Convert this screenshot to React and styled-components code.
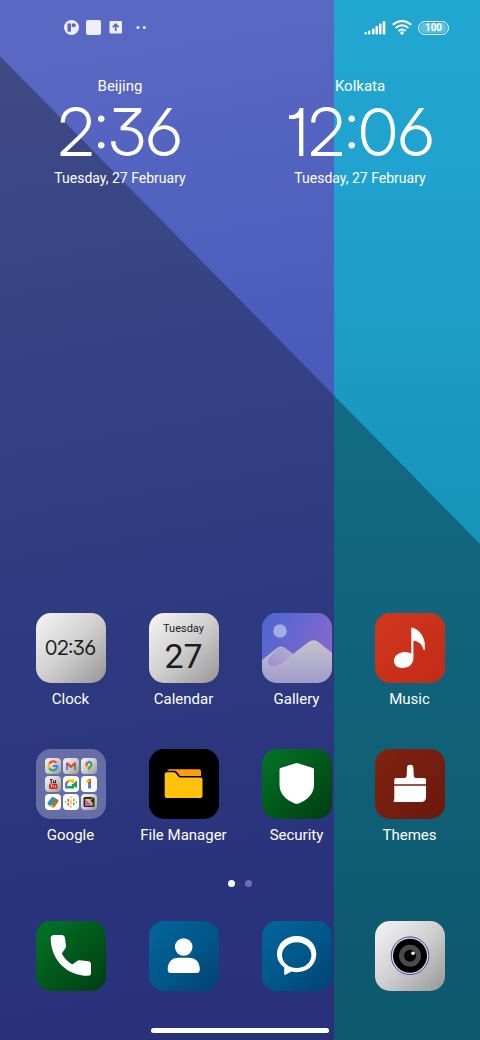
import React from 'react';
import styled, { createGlobalStyle } from 'styled-components';

const GlobalStyle = createGlobalStyle`
  *, *::before, *::after {
    box-sizing: border-box;
  }

  body {
    margin: 0;
    background: #28327a;
    font-family: Roboto, "Liberation Sans", sans-serif;
    color: #fff;
  }
`;

const Screen = styled.div`
  position: relative;
  isolation: isolate;
  display: flex;
  flex-direction: column;
  min-height: 100vh;
  overflow: hidden;
`;

const Wallpaper = styled.div`
  position: absolute;
  inset: 0;
  z-index: -1;
  display: grid;
  grid-template-columns: 334fr 146fr;
`;

const Panel = styled.div`
  background: ${props => props.$light};
`;

const Shade = styled(Wallpaper)`
  clip-path: polygon(0 5.4%, 100% 52.3%, 100% 100%, 0 100%);
`;

const StatusBar = styled.header`
  display: flex;
  align-items: center;
  justify-content: space-between;
  height: 55px;
  padding: 0 31px 0 64px;
`;

const StatusGroup = styled.div`
  display: flex;
  align-items: center;
  gap: ${props => props.$gap};
`;

const Battery = styled.span`
  display: flex;
  align-items: center;
  justify-content: center;
  width: 31px;
  height: 14px;
  border: 1px solid #e8f6fb;
  border-radius: 7px;
  background: #5fc0de;
  box-shadow: inset 0 0 0 1px #22a6cf;
  font-size: 10px;
  font-weight: 700;
  line-height: 12px;
`;

const Clocks = styled.section`
  display: grid;
  grid-template-columns: 1fr 1fr;
  padding-top: 21px;
`;

const CityClock = styled.div`
  display: flex;
  flex-direction: column;
  align-items: center;
  line-height: 20px;
  white-space: nowrap;
`;

const City = styled.span`
  font-size: 15px;
`;

const DateText = styled.span`
  font-size: 14px;
`;

const Time = styled.time`
  font-family: "Inter Display", Inter, Roboto, sans-serif;
  font-size: 66px;
  font-weight: 300;
  line-height: 72px;
  font-feature-settings: "cv01", "cv03", "cv09";
  font-variation-settings: "opsz" 32;
`;

const Apps = styled.main`
  display: grid;
  grid-template-columns: repeat(4, 1fr);
  row-gap: 40px;
  margin-top: auto;
  padding: 0 14px;
`;

const Dock = styled.nav`
  display: grid;
  grid-template-columns: repeat(4, 1fr);
  padding: 0 14px 37px;
`;

const AppButton = styled.button`
  display: flex;
  flex-direction: column;
  align-items: center;
  gap: 6px;
  padding: 0;
  border: none;
  background: none;
  color: inherit;
  font-family: inherit;
  font-size: 15px;
  line-height: 20px;
  white-space: nowrap;
  cursor: pointer;
`;

const Tile = styled.span`
  display: flex;
  flex-direction: column;
  align-items: center;
  justify-content: center;
  width: 70px;
  height: 70px;
  border-radius: 15px;
  overflow: hidden;
  background: ${props => props.$bg};
  color: #1c1c1c;
`;

const TileClock = styled.span`
  font-family: "Inter Display", Inter, Roboto, sans-serif;
  font-size: 20px;
  line-height: 24px;
  font-feature-settings: "cv01", "cv03", "cv09";
  font-variation-settings: "opsz" 32;
`;

const TileDay = styled.span`
  font-size: 11px;
  line-height: 16px;
`;

const TileDate = styled.span`
  font-size: 34px;
  line-height: 38px;
`;

const FolderGrid = styled.span`
  display: grid;
  grid-template-columns: repeat(3, 16px);
  gap: 2px;
`;

const MiniTile = styled.span`
  display: flex;
  height: 16px;
  border-radius: 4px;
  overflow: hidden;
  background: ${props => props.$bg};
`;

const Pager = styled.div`
  display: flex;
  align-items: center;
  justify-content: center;
  gap: 10px;
  height: 76px;
`;

const Dot = styled.span`
  width: 7px;
  height: 7px;
  border-radius: 50%;
  background: ${props => (props.$active ? '#fff' : '#6a71a8')};
`;

const HomeBar = styled.div`
  align-self: center;
  width: 37%;
  height: 5px;
  margin-bottom: 7px;
  border-radius: 3px;
  background: #fff;
`;

const silver = 'linear-gradient(135deg, #f6f6f6 0%, #cfcfcf 50%, #979797 100%)';
const green = 'linear-gradient(135deg, #04752a 0%, #005c1c 45%, #003d12 100%)';
const blue = 'linear-gradient(135deg, #03659a 0%, #01568a 55%, #01436f 100%)';

const Glyph = ({ children }) => (
  <svg width="70" height="70" viewBox="0 0 70 70" fill="#fff" aria-hidden="true">
    {children}
  </svg>
);

const Mini = ({ bg = '#fff', children }) => (
  <MiniTile $bg={bg}>
    <svg width="16" height="16" viewBox="0 0 16 16" fill="none" aria-hidden="true">
      {children}
    </svg>
  </MiniTile>
);

const GalleryIcon = () => (
  <Glyph>
    <defs>
      <linearGradient id="sky" x1="0" y1="0" x2="1" y2="0.6">
        <stop offset="0" stopColor="#4a66d2" />
        <stop offset="1" stopColor="#8a68ce" />
      </linearGradient>
      <linearGradient id="hill" x1="0" y1="0" x2="0" y2="1">
        <stop offset="0" stopColor="#c6c4cb" />
        <stop offset="1" stopColor="#a09bcd" />
      </linearGradient>
      <linearGradient id="ridge" x1="0" y1="1" x2="1" y2="0">
        <stop offset="0" stopColor="#9b8dcb" />
        <stop offset="1" stopColor="#b9afd4" />
      </linearGradient>
    </defs>
    <rect width="70" height="70" fill="url(#sky)" />
    <circle cx="18" cy="18" r="6.7" fill="#a5ade0" />
    <path d="M0 47 15 35Q19 32 23 35L31 41 46 29.500Q52 25 57 29.500L70 40V70H0Z" fill="url(#hill)" />
    <path d="M8 44 15 36.500Q19 33 23 35.500L31 41 22 49Q13 55 7.500 52 4 48.500 8 44Z" fill="url(#ridge)" />
  </Glyph>
);

const MusicIcon = () => (
  <Glyph>
    <path d="M36.300 15Q36.500 14.300 38 14.700C46 17.500 51 26 49.800 36.500Q49.300 38 48.500 36.500C47 31 43 28 38.400 27.800V45C38.400 51 34 55 27.500 55 22 55 19 52 19 48 19 42.500 24 39 30 39Q34 39 36.300 40.500Z" />
  </Glyph>
);

const FilesIcon = () => (
  <Glyph>
    <path d="M18.300 22.200Q18.300 20.200 20.300 20.200H50Q52 20.200 52 22.200V27H31L28 23Q27 21.800 25.500 21.800H18.300Z" fill="#ff9d0a" />
    <path d="M15.700 25.300Q15.700 23.300 17.700 23.300H24.500Q26 23.300 27 24.600L29 27.300Q30 28.600 31.500 28.600H51.500Q53.500 28.600 53.500 30.600V47Q53.500 49 51.500 49H17.700Q15.700 49 15.700 47Z" fill="#ffc20c" />
  </Glyph>
);

const SecurityIcon = () => (
  <Glyph>
    <path d="M33.500 14.300Q34.700 13.800 36 14.300L51 19Q52 19.400 52 20.500V36C52 45 45 51.500 36 54.700Q34.700 55 33.500 54.700C24.500 51.500 17.500 45 17.500 36V20.500Q17.500 19.400 18.500 19Z" />
  </Glyph>
);

const ThemesIcon = () => (
  <Glyph>
    <path d="M32 19Q32 15.700 35.200 15.700T38.400 19L38.800 27Q39 29 41 29H49.500Q51 29 51 30.500V35.200H19.300V30.500Q19.300 29 20.800 29H29.500Q31.500 29 31.700 27Z" />
    <path d="M19.300 36.800H51V48Q51 53 46 53H19.500Q18 53 18.800 51.600 19.300 50.500 19.300 49Z" />
  </Glyph>
);

const PhoneIcon = () => (
  <Glyph>
    <path d="M14.700 17.500Q14.700 14 18 14H26Q28.600 14 28.900 16.500L30 25Q30 26.500 29 27.800L25.800 32.500C28.500 37.500 31.500 40.500 36.300 43.500L41 40Q42.500 39 44 39.300L52.500 40.300Q55 40.600 55 43V52Q55 54.800 52 54.800C32 55 15 40 14.700 17.500Z" />
  </Glyph>
);

const ContactsIcon = () => (
  <Glyph>
    <circle cx="34.700" cy="26" r="8.800" />
    <path d="M18.700 48.500C18.700 41 23 36.800 29.500 36.800H40C46.500 36.800 50.800 41 50.800 48.500Q50.800 52 47.500 52H22Q18.700 52 18.700 48.500Z" />
  </Glyph>
);

const MessagesIcon = () => (
  <Glyph>
    <path
      fillRule="evenodd"
      d="M34.700 15C46 15 54.300 22.800 54.300 33S46 51.200 34.700 51.200Q32 51.200 29.500 50.600L23.500 53.800Q22.200 54.200 22.200 52.800V46.300C17.500 43 15 38.500 15 33 15 22.800 23.500 15 34.700 15ZM34.700 21.300C26.500 21.300 20 27 20 34.200S26.500 47 34.700 47 49.400 41.400 49.400 34.200 43 21.300 34.700 21.300Z"
    />
  </Glyph>
);

const CameraIcon = () => (
  <Glyph>
    <circle cx="35" cy="34.700" r="18.800" fill="#d8d8de" stroke="#5a3fae" />
    <circle cx="35" cy="34.700" r="17" fill="#000" />
    <circle cx="35" cy="34.700" r="8.500" fill="#050505" stroke="#4a4a4a" strokeWidth="5" />
    <circle cx="38" cy="32.300" r="1.800" />
  </Glyph>
);

const GoogleFolder = () => (
  <FolderGrid>
    <Mini bg={silver}>
      <g strokeWidth="2.200">
        <path d="M11.500 4.800A4.300 4.300 0 0 0 4.300 5.800" stroke="#ea4335" />
        <path d="M4.300 5.800A4.300 4.300 0 0 0 4.300 10.200" stroke="#fbbc05" />
        <path d="M4.300 10.200A4.300 4.300 0 0 0 10.800 11.300" stroke="#34a853" />
        <path d="M8 8H12.300A4.300 4.300 0 0 1 10.800 11.300" stroke="#4285f4" />
      </g>
    </Mini>
    <Mini bg={silver}>
      <path d="M4 12V5" stroke="#4285f4" strokeWidth="2" />
      <path d="M12 12V5" stroke="#34a853" strokeWidth="2" />
      <path d="M3.500 5 8 8.800 12.500 5" stroke="#ea4335" strokeWidth="2.400" />
    </Mini>
    <Mini bg={silver}>
      <path d="M8 13C7.500 10 4.500 9.500 4.500 6.500L8 6.500 11 4.500C13 8.500 9 9.500 8 13Z" fill="#34a853" />
      <path d="M4.700 7.500A3.500 3.500 0 0 1 6 3.700L8 6Z" fill="#ea4335" />
      <path d="M6 3.700A3.500 3.500 0 0 1 11 4.500L8.500 7Z" fill="#4285f4" />
      <path d="M5 8.500 8.500 5 9 7.500 6.500 10.500Z" fill="#fbbc05" />
      <circle cx="8" cy="6.500" r="1.200" fill="#ddd" />
    </Mini>
    <Mini bg={silver}>
      <path d="M5 3.500H7.500M6.200 3.500V7M8.500 4.500V6.500H10.500V4" stroke="#333" strokeWidth="1.200" />
      <rect x="4" y="7.500" width="8.500" height="5.500" rx="1.500" fill="#d5282c" />
      <path d="M5.500 9H7.500M6.500 9V11.500M8.500 9.500V11.500M10.500 9.500V11.500" stroke="#fff" strokeWidth="0.700" />
    </Mini>
    <Mini>
      <path d="M2 7 5.500 3.500V7Z" fill="#ea4335" />
      <path d="M5.500 4.700H10V7" stroke="#fbbc05" strokeWidth="2.400" />
      <path d="M3.200 7V11.300H6" stroke="#4285f4" strokeWidth="2.400" />
      <path d="M5.500 11.300H10V8" stroke="#12a34a" strokeWidth="2.400" />
      <path d="M10 8 14 4.500V12L10 9.500Z" fill="#12a34a" />
    </Mini>
    <Mini>
      <path d="M8.500 7V12.500" stroke="#4285f4" strokeWidth="3" />
      <path d="M8.500 3V7.500" stroke="#ea4335" strokeWidth="3" />
      <path d="M5.500 6 8.500 4" stroke="#fbbc05" strokeWidth="2.600" />
    </Mini>
    <Mini>
      <path d="M4.500 9.500 8 5" stroke="#3e7bf0" strokeWidth="4" strokeLinecap="round" />
      <path d="M8 11.500 11.500 7" stroke="#ea5136" strokeWidth="4" strokeLinecap="round" />
      <path d="M7 10.500 10 5.500" stroke="#34a853" strokeWidth="3.200" strokeLinecap="round" />
      <path d="M5.500 12H7" stroke="#fbbc05" strokeWidth="2" strokeLinecap="round" />
    </Mini>
    <Mini>
      <g strokeWidth="1.400" strokeLinecap="round">
        <path d="M2.500 8H2.600" stroke="#4285f4" />
        <path d="M5.200 5.500V7.500" stroke="#ea4335" />
        <path d="M5.200 9.500V11" stroke="#ea4335" />
        <path d="M8 3V3.500M8 6V10" stroke="#fbbc05" />
        <path d="M8 12.500V13" stroke="#fb8c05" />
        <path d="M10.800 5.500V6.500M10.800 9V10.500" stroke="#34a853" />
        <path d="M13.400 8H13.500" stroke="#34a853" />
      </g>
    </Mini>
    <Mini bg={silver}>
      <rect x="2.500" y="3" width="11" height="10" rx="1.500" fill="#2b2b2e" />
      <path d="M4 5H9L12 11.500H4Z" fill="#f2c14d" />
      <path d="M4 5 11 11.500H4Z" fill="#d653b8" />
      <path d="M4 8 7.500 11.500H4Z" fill="#6f7df0" />
      <path d="M8 5 12 9V11.500Z" fill="#54b66a" />
      <path d="M9 6.500 13 2.500" stroke="#e4e4e4" strokeWidth="0.800" />
    </Mini>
  </FolderGrid>
);

const clocks = [
  { city: 'Beijing', time: '2:36', date: 'Tuesday, 27 February' },
  { city: 'Kolkata', time: '12:06', date: 'Tuesday, 27 February' },
];

const apps = [
  { name: 'Clock', bg: silver, icon: <TileClock>02:36</TileClock> },
  {
    name: 'Calendar',
    bg: silver,
    icon: (
      <>
        <TileDay>Tuesday</TileDay>
        <TileDate>27</TileDate>
      </>
    ),
  },
  { name: 'Gallery', bg: '#4a66d2', icon: <GalleryIcon /> },
  { name: 'Music', bg: 'linear-gradient(135deg, #cf371d, #c32b19)', icon: <MusicIcon /> },
  { name: 'Google', bg: '#666ea5', icon: <GoogleFolder /> },
  { name: 'File Manager', bg: '#000', icon: <FilesIcon /> },
  { name: 'Security', bg: green, icon: <SecurityIcon /> },
  { name: 'Themes', bg: 'linear-gradient(135deg, #802312, #6b180e)', icon: <ThemesIcon /> },
];

const dockApps = [
  { name: 'Phone', bg: green, icon: <PhoneIcon /> },
  { name: 'Contacts', bg: blue, icon: <ContactsIcon /> },
  { name: 'Messages', bg: blue, icon: <MessagesIcon /> },
  { name: 'Camera', bg: silver, icon: <CameraIcon /> },
];

export default function App() {
  return (
    <>
      <GlobalStyle />
      <Screen>
        <Wallpaper>
          <Panel $light="linear-gradient(170deg, #5a6ac4 0%, #4a5aba 40%)" />
          <Panel $light="linear-gradient(180deg, #20a7d0 0%, #20a2ce 18%, #1893ba 52%)" />
        </Wallpaper>
        <Shade>
          <Panel $light="linear-gradient(170deg, #3f4a86 6%, #333f82 42%, #2b367e 72%, #28317a 100%)" />
          <Panel $light="linear-gradient(180deg, #126b83 38%, #10627a 65%, #0d586d 100%)" />
        </Shade>

        <StatusBar>
          <StatusGroup $gap="7px">
            <svg width="15" height="15" viewBox="0 0 15 15" aria-hidden="true">
              <circle cx="7.500" cy="7.500" r="7.500" fill="#eeeffa" />
              <path d="M3.500 3.500H7V11Q5.200 13 3.500 11Z" fill="#5968c2" />
              <circle cx="9.700" cy="5.200" r="2" fill="#5968c2" />
            </svg>
            <svg width="15" height="15" viewBox="0 0 15 15" aria-hidden="true">
              <rect width="15" height="15" rx="2" fill="#eeeffa" />
            </svg>
            <svg width="15" height="15" viewBox="0 0 15 15" aria-hidden="true">
              <rect x="1.500" y="1" width="12.500" height="12.500" rx="1" fill="#eeeffa" />
              <path d="M7.700 11V4.500M4.800 7.200 7.700 4.300 10.600 7.200" fill="none" stroke="#5968c2" strokeWidth="1.700" />
            </svg>
            <svg width="22" height="15" viewBox="0 0 22 15" aria-hidden="true">
              <circle cx="8" cy="7.500" r="1.500" fill="#eeeffa" />
              <circle cx="14.300" cy="7.500" r="1.500" fill="#eeeffa" />
            </svg>
          </StatusGroup>
          <StatusGroup $gap="6px">
            <svg width="22" height="15" viewBox="0 0 22 15" fill="#fff" aria-hidden="true">
              <rect x="0.500" y="12" width="2.500" height="2.500" rx="1" />
              <rect x="4" y="10.500" width="2.500" height="4" rx="1" />
              <rect x="8" y="8.500" width="2.500" height="6" rx="1" />
              <rect x="11.500" y="6" width="2.500" height="8.500" rx="1" />
              <rect x="15" y="3.500" width="2.500" height="11" rx="1" />
              <rect x="18.700" y="1" width="2.600" height="13.500" rx="1" />
            </svg>
            <svg width="20" height="15" viewBox="0 0 20 15" fill="none" stroke="#fff" strokeWidth="2" aria-hidden="true">
              <path d="M0.700 4.800Q10-3 19.300 4.800" />
              <path d="M3.600 8Q10 2.600 16.400 8" />
              <path d="M6.400 11Q10 8 13.600 11" />
              <circle cx="10" cy="13" r="1.700" fill="#fff" stroke="none" />
            </svg>
            <Battery>100</Battery>
          </StatusGroup>
        </StatusBar>

        <Clocks>
          {clocks.map(({ city, time, date }) => (
            <CityClock key={city}>
              <City>{city}</City>
              <Time>{time}</Time>
              <DateText>{date}</DateText>
            </CityClock>
          ))}
        </Clocks>

        <Apps>
          {apps.map(({ name, bg, icon }) => (
            <AppButton key={name} type="button">
              <Tile $bg={bg}>{icon}</Tile>
              <span>{name}</span>
            </AppButton>
          ))}
        </Apps>

        <Pager>
          <Dot $active />
          <Dot />
        </Pager>

        <Dock>
          {dockApps.map(({ name, bg, icon }) => (
            <AppButton key={name} type="button" aria-label={name}>
              <Tile $bg={bg}>{icon}</Tile>
            </AppButton>
          ))}
        </Dock>
        <HomeBar />
      </Screen>
    </>
  );
}
